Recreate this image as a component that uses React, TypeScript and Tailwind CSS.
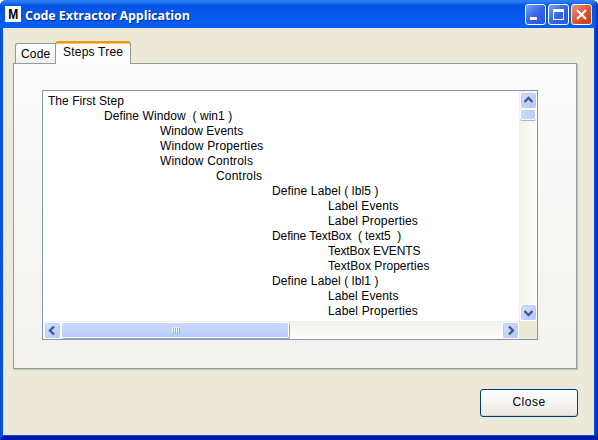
import type { ReactNode } from "react";

const steps = [
  { text: "The First Step", indent: "pl-0 tracking-[0.04px]" },
  { text: "Define Window  ( win1 )", indent: "pl-[56px] tracking-[0.07px]" },
  { text: "Window Events", indent: "pl-[112px] tracking-[0.04px]" },
  { text: "Window Properties", indent: "pl-[112px] tracking-[0.16px]" },
  { text: "Window Controls", indent: "pl-[112px] tracking-[0.16px]" },
  { text: "Controls", indent: "pl-[168px] tracking-[0.2px]" },
  { text: "Define Label ( lbl5 )", indent: "pl-[224px] tracking-[0.12px]" },
  { text: "Label Events", indent: "pl-[280px] tracking-[0.1px]" },
  { text: "Label Properties", indent: "pl-[280px] tracking-[0.16px]" },
  { text: "Define TextBox  ( text5  )", indent: "pl-[224px] -tracking-[0.08px]" },
  { text: "TextBox EVENTS", indent: "pl-[280px] -tracking-[0.12px]" },
  { text: "TextBox Properties", indent: "pl-[280px] tracking-[0.04px]" },
  { text: "Define Label ( lbl1 )", indent: "pl-[224px] tracking-[0.12px]" },
  { text: "Label Events", indent: "pl-[280px] tracking-[0.1px]" },
  { text: "Label Properties", indent: "pl-[280px] tracking-[0.16px]" },
];

function CaptionButton({ label, close, children }: { label: string; close?: boolean; children: ReactNode }) {
  return (
    <button
      aria-label={label}
      className={`h-[21px] w-[21px] rounded-[3px] border border-white bg-linear-to-br ${
        close ? "from-[#ee9274] via-[#df5530] to-[#c83a15]" : "from-[#7ba0f4] via-[#3566e4] to-[#2454dc]"
      }`}
    >
      <svg viewBox="0 0 19 19" className="h-[19px] w-[19px]" shapeRendering={close ? "auto" : "crispEdges"}>
        {children}
      </svg>
    </button>
  );
}

function ScrollButton({ label, d }: { label: string; d: string }) {
  return (
    <button
      aria-label={label}
      className="h-[17px] w-[17px] shrink-0 rounded-[3px] border border-white bg-linear-to-br from-[#d5e1fd] to-[#b2c8f8] shadow-[inset_0_0_0_1px_#bacdf8]"
    >
      <svg viewBox="0 0 15 15" className="h-[15px] w-[15px]" fill="none" stroke="#445b8d" strokeWidth="2.4">
        <path d={d} />
      </svg>
    </button>
  );
}

export default function App() {
  return (
    <div className="h-[440px] w-[598px] overflow-hidden bg-white font-['Liberation_Sans',Arial,sans-serif] text-[12px] text-black">
      <div className="flex h-full flex-col overflow-hidden rounded-t-[6px] bg-[#0640d5]">
        <header className="flex h-[28px] shrink-0 items-start bg-linear-to-b from-[#348cf5] via-[#0553e5] via-20% to-[#0560f5] pr-[6px] pl-[5px] shadow-[inset_-2px_0_1px_#0739bd]">
          <div className="mt-[6px] flex h-[16px] w-[16px] items-center justify-center bg-white text-[15px] leading-[16px] font-bold">
            <span className="scale-x-[0.8]">M</span>
          </div>
          <h1 className="mt-[7px] ml-[4px] flex-1 font-['Open_Sans','Noto_Sans',sans-serif] text-[12.5px] leading-[18px] font-bold -tracking-[0.08px] whitespace-nowrap text-white [text-shadow:1px_1px_1px_#082a91]">
            Code Extractor Application
          </h1>
          <div className="mt-[4px] flex gap-[2px]">
            <CaptionButton label="Minimize">
              <path d="M4 12h7v3H4z" fill="white" />
            </CaptionButton>
            <CaptionButton label="Maximize">
              <path d="M4 4h11v11H4zM5 7v7h9V7z" fill="white" fillRule="evenodd" />
            </CaptionButton>
            <CaptionButton label="Close window" close>
              <path d="M5 5l9 9M14 5l-9 9" stroke="white" strokeWidth="2.3" />
            </CaptionButton>
          </div>
        </header>

        <div className="flex min-h-0 flex-1 border-l-[3px] border-[#0850e0] border-b-[4px] border-b-[#0019a8] shadow-[inset_0_0_1px_#0640d5]">
          <main className="flex flex-1 flex-col border-b border-[#1648d8] bg-[#ece9d8] pt-[13px] pl-[10px]">
            <div className="flex h-[22px] items-end pl-[2px]">
              <div className="h-[20px] w-[40px] rounded-tl-[3px] border border-r-0 border-b-0 border-[#919b9c] bg-linear-to-b from-white to-[#f2f2eb] pl-[5px] leading-[20px] tracking-[0.15px]">Code</div>
              <div className="relative z-10 -mb-px h-[23px] w-[76px] overflow-hidden rounded-t-[3px] border-x border-t-[2px] border-[#919b9c] border-t-[#e5972d] bg-[#fdfdfe] pl-[7px] leading-[18px] tracking-[0.22px] shadow-[inset_0_1px_#ffc73c]">Steps Tree</div>
            </div>
            <section className="h-[306px] w-[564px] border border-[#919b9c] bg-linear-to-b from-[#fcfcfe] to-[#f3f2ed] pt-[26px] pl-[28px] shadow-[1px_1px_1px_#cac8ba]">
              <div className="flex h-[250px] w-[496px] border border-[#8297ad] bg-white">
                <div className="flex min-w-0 flex-1 flex-col">
                  <div className="h-[230px] pt-[2px] pl-[5px]">
                    {steps.map((step, index) => (
                      <div key={index} className={`h-[15px] leading-[16px] whitespace-pre ${step.indent}`}>{step.text}</div>
                    ))}
                  </div>
                  <div className="flex h-[18px] items-center bg-linear-to-b from-[#f1f0e9] to-[#fffefc] pl-px">
                    <ScrollButton label="Scroll left" d="M9 3.5 5 7.5 9 11.5" />
                    <div className="flex h-[16px] w-[228px] items-center justify-center gap-px rounded-[2px] border border-white bg-linear-to-b from-[#cbdafe] to-[#b9ccfb] shadow-[1px_1px_0_#8facd5]">
                      {[0, 1, 2, 3].map((grip) => (
                        <i key={grip} className="mb-px h-[6px] w-px bg-[#eef4fe] shadow-[1px_1px_#8cb0f8]" />
                      ))}
                    </div>
                    <div className="flex-1" />
                    <ScrollButton label="Scroll right" d="M6 3.5 10 7.5 6 11.5" />
                  </div>
                </div>
                <div className="flex w-[18px] flex-col">
                  <div className="flex h-[230px] flex-col items-center bg-linear-to-r from-[#f1f0e9] to-[#fffefc] pt-px">
                    <ScrollButton label="Scroll up" d="M3.5 9 7.5 5 11.5 9" />
                    <div className="h-[11px] w-[16px] rounded-[2px] border border-white bg-linear-to-r from-[#cbdafe] to-[#b9ccfb] shadow-[0_1px_0_#9fb5d2]" />
                    <div className="flex-1" />
                    <ScrollButton label="Scroll down" d="M3.5 6 7.5 10 11.5 6" />
                  </div>
                  <div className="h-[18px] bg-[#ece9d8]" />
                </div>
              </div>
            </section>
            <button className="mt-[20px] ml-[467px] h-[28px] w-[98px] rounded-[3px] border border-[#003c74] bg-linear-to-b from-white via-[#f5f5f1] to-[#e7e5dc] pb-[3px] text-[12px] tracking-[0.5px] shadow-[inset_0_-1px_#d9d5c9]">
              Close
            </button>
          </main>
          <div className="w-[4px] bg-linear-to-r from-[#0753e6] to-[#001fa3]" />
        </div>
      </div>
    </div>
  );
}
